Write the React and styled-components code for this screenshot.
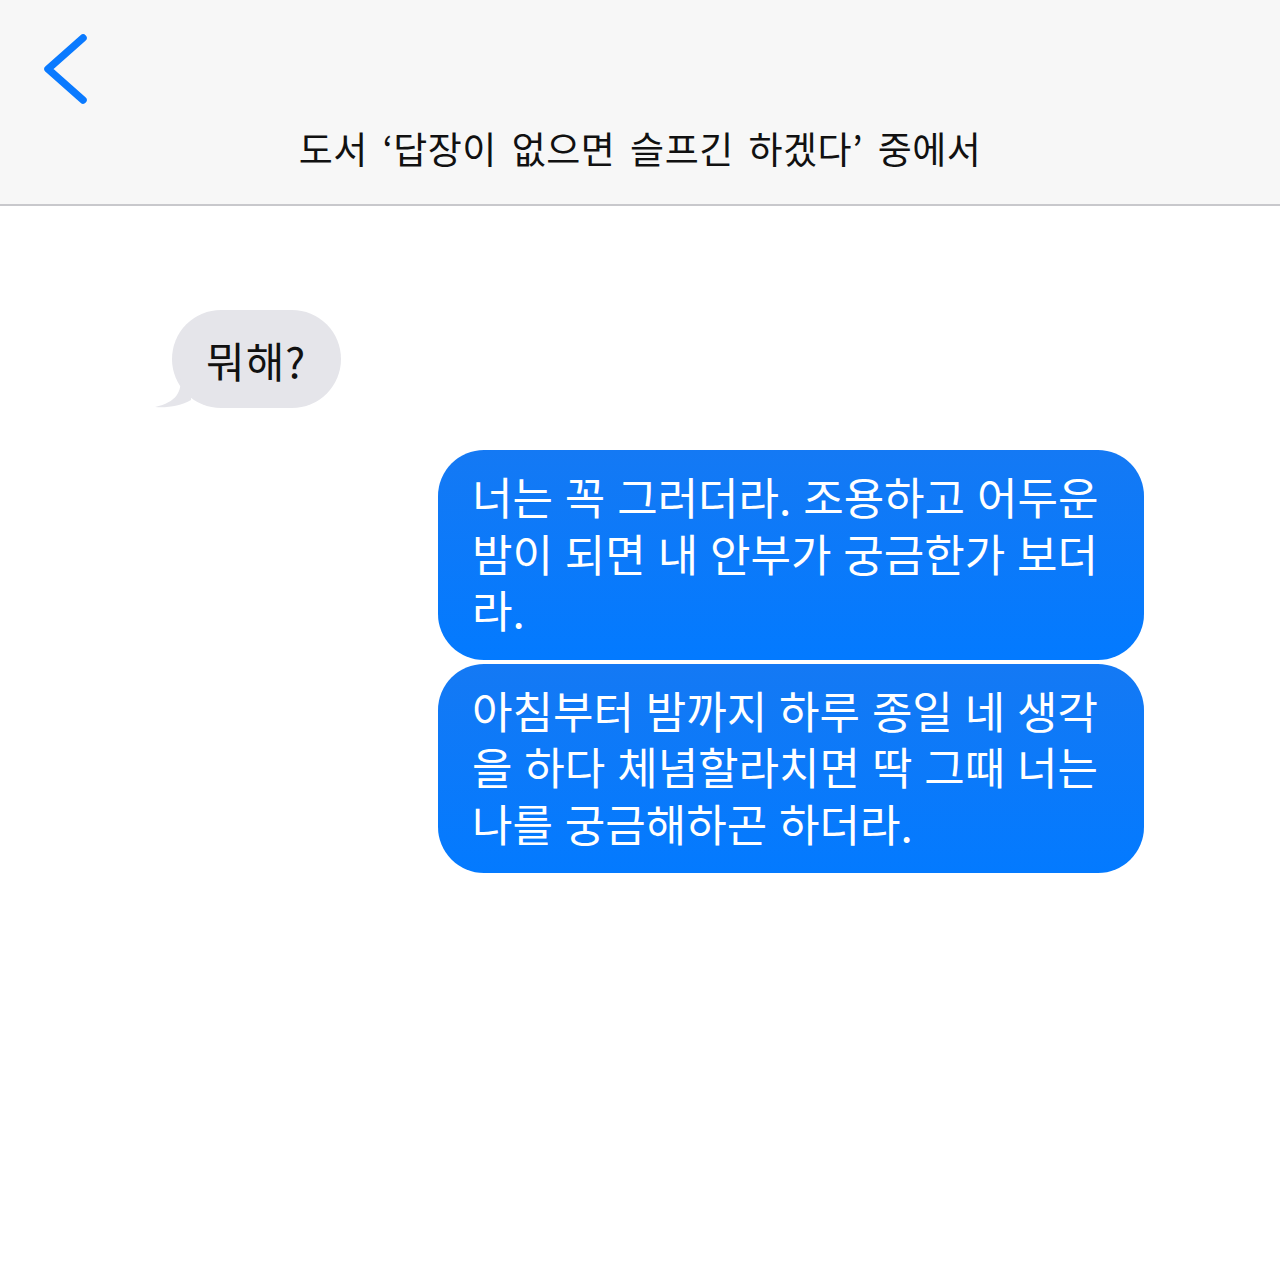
import React from "react";
import styled, { createGlobalStyle } from "styled-components";

const GlobalStyle = createGlobalStyle`
  html, body {
    margin: 0;
    padding: 0;
    background: #ffffff;
  }
  body {
    font-family: "Noto Sans CJK KR", "Noto Sans", sans-serif;
  }
`;

const Page = styled.div`
  width: 1280px;
  height: 1280px;
  background: #ffffff;
  display: flex;
  flex-direction: column;
`;

const Header = styled.header`
  height: 204px;
  background: #f7f7f7;
  border-bottom: 2px solid #c8c8cc;
  display: flex;
  flex-direction: column;
  box-sizing: content-box;
`;

const BackButton = styled.div`
  padding: 34px 0 0 40px;
  height: 70px;
`;

const Title = styled.h1`
  margin: 0;
  padding-top: 21px;
  text-align: center;
  font-size: 37px;
  font-weight: 400;
  color: #111111;
  letter-spacing: 0.5px;
  word-spacing: 6px;
  line-height: 46px;
`;

const Thread = styled.main`
  display: flex;
  flex-direction: column;
  padding: 104px 136px 0 172px;
`;

const Received = styled.div`
  position: relative;
  align-self: flex-start;
  background: #e5e5ea;
  color: #111111;
  border-radius: 49px;
  height: 98px;
  padding: 0 35px 0 34px;
  display: flex;
  align-items: center;
  font-size: 42px;
  letter-spacing: 1px;
`;

const Tail = styled.svg`
  position: absolute;
  left: -17px;
  bottom: 0;
`;

const SentGroup = styled.div`
  margin-top: 42px;
  display: flex;
  flex-direction: column;
  align-items: flex-end;
  gap: 4px;
`;

const Sent = styled.div`
  width: 706px;
  box-sizing: border-box;
  background: linear-gradient(180deg, #1479f4 0%, #037aff 100%);
  color: #ffffff;
  border-radius: 46px;
  padding: 18px 34px 22px;
  font-size: 44px;
  line-height: 56.5px;
  white-space: pre;
  letter-spacing: 0;
  word-spacing: 2px;
`;

const Chevron = () => (
  <svg width="50" height="72" viewBox="0 0 50 72">
    <path
      d="M43 4 L8 35 L43 66"
      fill="none"
      stroke="#0a7aff"
      strokeWidth="7.5"
      strokeLinecap="round"
      strokeLinejoin="round"
    />
  </svg>
);

export default function App() {
  return (
    <Page>
      <GlobalStyle />
      <Header>
        <BackButton>
          <Chevron />
        </BackButton>
        <Title>도서 ‘답장이 없으면 슬프긴 하겠다’ 중에서</Title>
      </Header>
      <Thread>
        <Received>
          <Tail width="40" height="30" viewBox="0 0 40 30">
            <path
              d="M26 0 C26 14 22 24 0 29 C12 30 26 28 36 22 L36 0 Z"
              fill="#e5e5ea"
            />
          </Tail>
          뭐해?
        </Received>
        <SentGroup>
          <Sent>{"너는 꼭 그러더라. 조용하고 어두운\n밤이 되면 내 안부가 궁금한가 보더\n라."}</Sent>
          <Sent>{"아침부터 밤까지 하루 종일 네 생각\n을 하다 체념할라치면 딱 그때 너는\n나를 궁금해하곤 하더라."}</Sent>
        </SentGroup>
      </Thread>
    </Page>
  );
}
